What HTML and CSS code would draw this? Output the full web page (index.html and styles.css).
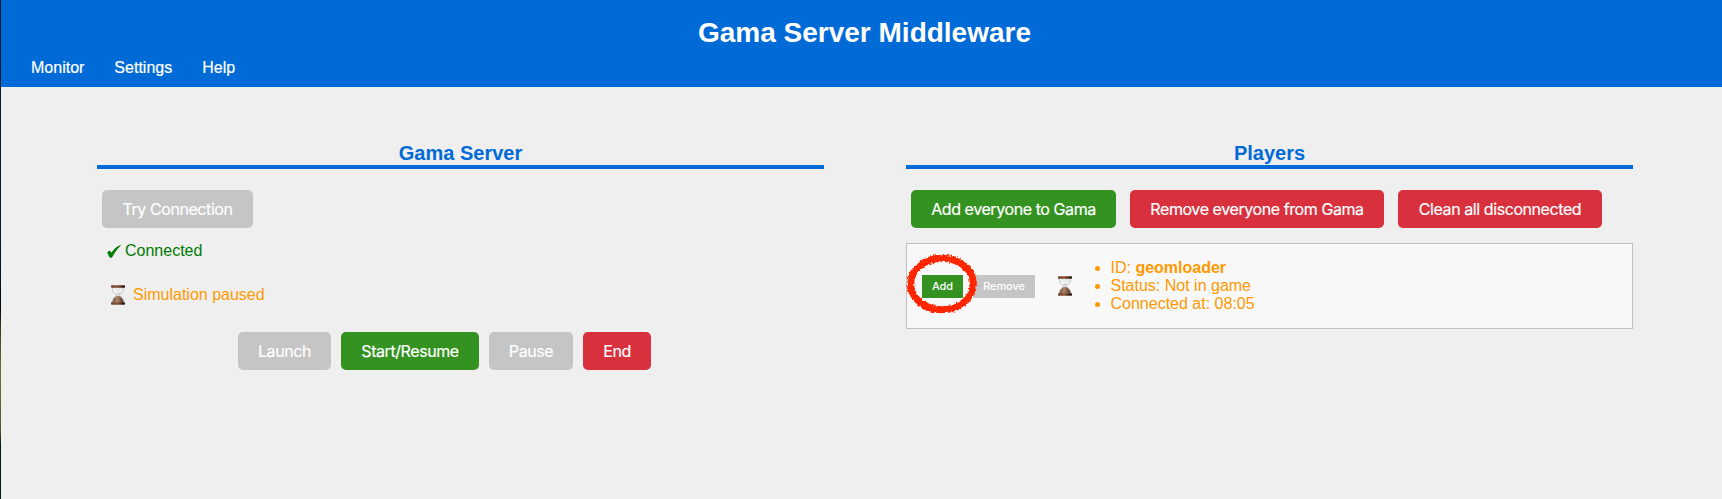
FILE: index.html
```html
<!DOCTYPE html>
<html lang="en">
<head>
<meta charset="utf-8">
<title>Gama Server Middleware</title>
<link rel="stylesheet" href="styles.css">
</head>
<body>
<svg class="defs" width="0" height="0" aria-hidden="true">
  <defs>
    <linearGradient id="cap" x1="0" x2="1"><stop offset="0" stop-color="#6b3f2c"/><stop offset=".45" stop-color="#8d5336"/><stop offset="1" stop-color="#1d0c08"/></linearGradient>
    <linearGradient id="sand" x1="0" x2="1"><stop offset="0" stop-color="#76533f"/><stop offset=".45" stop-color="#ab8466"/><stop offset="1" stop-color="#4e3020"/></linearGradient>
    <symbol id="hourglass" viewBox="0 0 14 20">
      <path d="M1.2 2.6C1.3 6.5 3 8.3 5.7 9.6v1.2C3 12 1.2 14 1 17.5h12c-.2-3.500-2-5.500-4.700-6.700V9.600C11 8.300 12.700 6.500 12.800 2.600z" fill="#e9ebec" stroke="#b4b5b6" stroke-width=".7"/>
      <path d="M3 3.500c.2 2.500 1.300 4 3 4.900" fill="none" stroke="#fff" stroke-width="1.200"/>
      <path d="M4.500 8h5L7.300 9.600z" fill="#c9c4c0"/>
      <path d="M7 10.800c-3 .8-5.300 3-5.700 6.700h11.400C12.300 13.800 10 11.600 7 10.800z" fill="url(#sand)"/>
      <rect y=".2" width="14" height="2.500" rx=".8" fill="url(#cap)"/>
      <rect y="17.300" width="14" height="2.500" rx=".8" fill="url(#cap)"/>
    </symbol>
    <filter id="rough" x="-15%" y="-15%" width="130%" height="130%">
      <feTurbulence type="fractalNoise" baseFrequency=".38" numOctaves="2" seed="4"/>
      <feDisplacementMap in="SourceGraphic" scale="4" xChannelSelector="R" yChannelSelector="G"/>
    </filter>
  </defs>
</svg>
<header class="header">
  <h1 class="title">Gama Server Middleware</h1>
  <nav class="nav"><a>Monitor</a><a>Settings</a><a>Help</a></nav>
</header>
<main class="main">
  <section class="panel">
    <h2 class="heading">Gama Server</h2>
    <div class="actions"><button class="btn off w-try">Try Connection</button></div>
    <p class="status ok"><svg class="check" viewBox="0 0 14 13"><path d="M.6 7.300C2.200 5.700 3.700 6 4.500 8.300 6.600 4.800 9.400 1.800 13.500.5 10.200 3.600 7.300 7.200 5.200 11.700c-.7 1-2.100 1.100-2.700.1C1.800 10.300 1.300 8.600.6 7.300z" fill="#007a00" stroke="#007a00" stroke-width=".8" stroke-linejoin="round"/></svg>Connected</p>
    <p class="status paused"><svg class="glass"><use href="#hourglass"/></svg>Simulation paused</p>
    <div class="controls">
      <button class="btn off w-launch">Launch</button>
      <button class="btn go w-start">Start/Resume</button>
      <button class="btn off w-pause">Pause</button>
      <button class="btn stop w-end">End</button>
    </div>
  </section>
  <section class="panel">
    <h2 class="heading">Players</h2>
    <div class="actions">
      <button class="btn go w-add">Add everyone to Gama</button>
      <button class="btn stop w-remove">Remove everyone from Gama</button>
      <button class="btn stop w-clean">Clean all disconnected</button>
    </div>
    <article class="player">
      <button class="mini go mini-add">Add</button>
      <button class="mini off mini-remove">Remove</button>
      <svg class="glass"><use href="#hourglass"/></svg>
      <ul class="info">
        <li>ID: <b>geomloader</b></li>
        <li>Status: Not in game</li>
        <li>Connected at: 08:05</li>
      </ul>
      <svg class="ring" viewBox="0 0 76 66"><ellipse cx="38" cy="33" rx="31.300" ry="25.800" fill="none" stroke="#ff2600" stroke-width="7" filter="url(#rough)"/></svg>
    </article>
  </section>
</main>
</body>
</html>
```
FILE: styles.css
```css
* { box-sizing: border-box; }
body {
  margin: 0;
  height: 499px;
  border-left: 1px solid #07131c;
  border-image: linear-gradient(#07202c, #0a1c2c 45%, #040c14 62%, #39430f 66%, #6c7430 74%, #4f5b22 86%, #08151a 89%, #08151a) 1;
  border-image-width: 0 0 0 1px;
  background: #efefef;
  font: 16px/18px "Liberation Sans", Arial, sans-serif;
  overflow: hidden;
}
.defs { position: absolute; }
.header { height: 87px; background: #006ad7; color: #fff; padding-top: 17px; }
.title { margin: 0; padding-left: 6px; font-size: 28px; line-height: 32px; text-align: center; }
.nav { display: flex; gap: 30px; padding: 10px 0 0 30px; -webkit-text-stroke: .2px #fff; }
.main { display: flex; gap: 82px; padding: 57px 0 0 96px; }
.panel { width: 727px; }
.heading {
  margin: 0;
  height: 25px;
  border-bottom: 4px solid #006ad7;
  color: #006ad7;
  font-size: 20px;
  line-height: 19px;
  text-align: center;
}
.actions { display: flex; gap: 14px; padding: 21px 5px 0; }
.btn, .mini {
  flex: none;
  border: 0;
  padding: 0;
  color: #fff;
  font-family: Inter, sans-serif;
  white-space: nowrap;
}
.btn { height: 38px; border-radius: 5px; font-size: 16px; letter-spacing: -.42px; -webkit-text-stroke: .2px #fff; }
.mini { height: 23px; font-size: 11px; font-weight: 500; letter-spacing: -.1px; }
.go { background: #349221; }
.stop { background: #d9303e; }
.off { background: #c5c5c5; }
.w-try { width: 151px; }
.w-launch { width: 93px; }
.w-start { width: 138px; }
.w-pause { width: 84px; }
.w-end { width: 68px; }
.w-add { width: 205px; }
.w-remove { width: 254px; }
.w-clean { width: 204px; }
.mini-add { width: 41px; }
.mini-remove { width: 62px; margin-left: 10px; }
.status { display: flex; align-items: center; margin: 0; height: 20px; }
.ok { margin-top: 13px; padding-left: 10px; color: #007a00; }
.check { width: 14px; height: 13px; margin-right: 4px; }
.paused { margin-top: 24px; padding-left: 14px; color: #ff9900; }
.paused .glass { margin-right: 8px; }
.glass { flex: none; width: 14px; height: 20px; }
.controls { display: flex; gap: 10px; padding: 27px 0 0 141px; }
.player {
  position: relative;
  display: flex;
  align-items: center;
  height: 86px;
  margin-top: 15px;
  padding-left: 15px;
  border: 1px solid #c1c1c1;
  background: #f8f8f8;
  color: #ff9900;
}
.player .glass { margin-left: 23px; }
.info { margin: 0; padding: 0 0 0 38.5px; }
.ring { position: absolute; left: -3.5px; top: 6.5px; width: 76px; height: 66px; }
```
